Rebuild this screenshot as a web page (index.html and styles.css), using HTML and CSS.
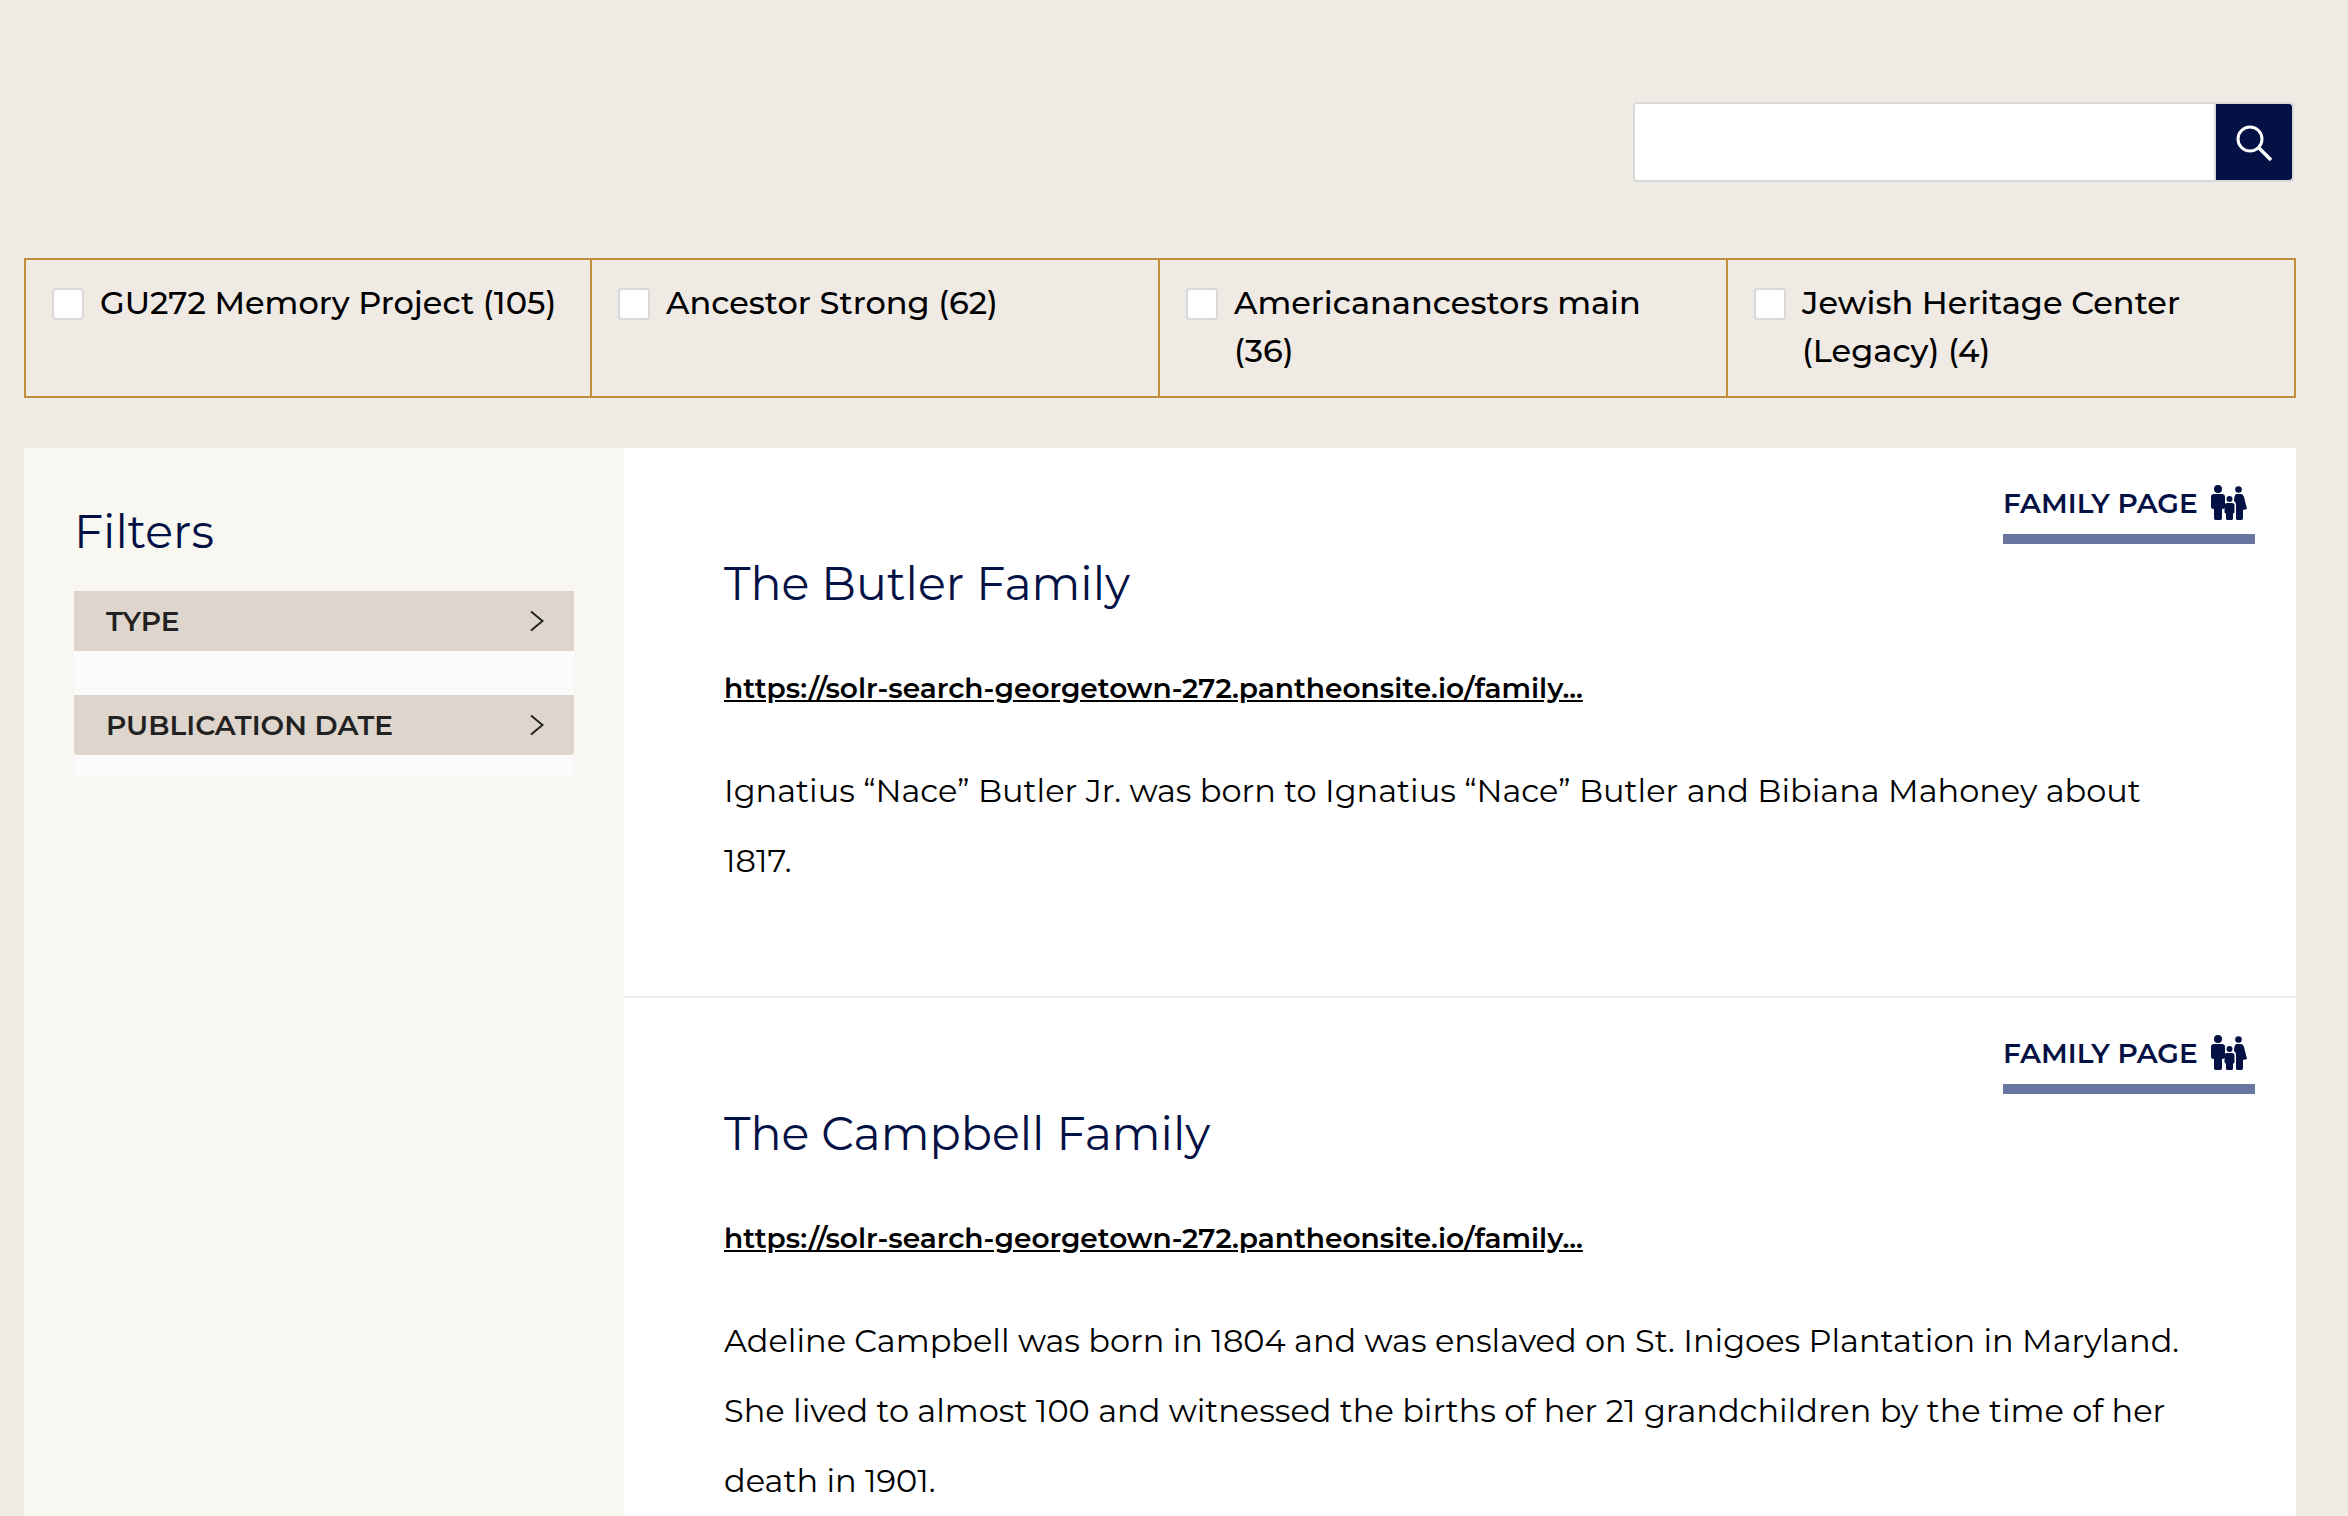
FILE: index.html
```html
<!DOCTYPE html>
<html lang="en">
<head>
<meta charset="utf-8">
<meta name="viewport" content="width=device-width, initial-scale=1">
<title>Search results</title>
<link rel="stylesheet" href="styles.css">
</head>
<body>
<svg class="sprite" aria-hidden="true">
  <symbol id="family" viewBox="0 0 36 36">
    <circle cx="7" cy="4" r="4"/>
    <path d="M3 9h8q3 0 3 3v10q0 2-2.500 2H11v9q0 2-1.500 2h-5Q3 35 3 33v-9H2.500Q0 24 0 22V12q0-3 3-3z"/>
    <circle cx="18.500" cy="14" r="3"/>
    <path d="M16 18h5q2.500 0 2.500 2.500v6.500q0 1.500-1.500 1.500v5q0 1.500-1.500 1.500h-4q-1.500 0-1.500-1.500v-5q-1.500 0-1.500-1.500v-6.500q0-2.500 2.500-2.500z"/>
    <circle cx="27.500" cy="4.500" r="3.300"/>
    <path d="M25 9h5q2 0 3 3l3 12-4 1v8q0 2-1.500 2h-4.500Q25 35 25 33v-6V20q0-3-2-4 0-5 2-7z"/>
  </symbol>
</svg>
<header class="top">
  <form class="search" role="search">
    <input class="search-field" type="search" aria-label="Search">
    <button class="search-button" type="button" aria-label="Submit search">
      <svg width="38" height="38" viewBox="0 0 38 38" fill="none" stroke="#fff" stroke-width="3"><circle cx="15" cy="16" r="12"/><path d="M23.500 24.500 36 37" stroke-width="3.500"/></svg>
    </button>
  </form>
</header>
<main class="page">
  <fieldset class="sites" aria-label="Sites">
    <label class="site"><input type="checkbox"><span>GU272 Memory Project (105)</span></label>
    <label class="site"><input type="checkbox"><span>Ancestor Strong (62)</span></label>
    <label class="site"><input type="checkbox"><span>Americanancestors main (36)</span></label>
    <label class="site"><input type="checkbox"><span>Jewish Heritage Center (Legacy) (4)</span></label>
  </fieldset>
  <div class="columns">
    <aside class="filters">
      <h2 class="heading">Filters</h2>
      <div class="accordion">
        <button class="toggle" type="button">TYPE
          <svg width="14" height="22" viewBox="0 0 14 22" fill="none" stroke="#222" stroke-width="2"><path d="M1 1.500 12.500 11 1 20.500"/></svg>
        </button>
        <button class="toggle" type="button">PUBLICATION DATE
          <svg width="14" height="22" viewBox="0 0 14 22" fill="none" stroke="#222" stroke-width="2"><path d="M1 1.500 12.500 11 1 20.500"/></svg>
        </button>
      </div>
    </aside>
    <section class="results">
      <article class="result">
        <div class="badge">FAMILY PAGE <svg width="36" height="36"><use href="#family"/></svg></div>
        <h2 class="heading">The Butler Family</h2>
        <a class="url" href="#butler">https://solr-search-georgetown-272.pantheonsite.io/family...</a>
        <p class="summary">Ignatius “Nace” Butler Jr. was born to Ignatius “Nace” Butler and Bibiana Mahoney about 1817.</p>
      </article>
      <article class="result">
        <div class="badge">FAMILY PAGE <svg width="36" height="36"><use href="#family"/></svg></div>
        <h2 class="heading">The Campbell Family</h2>
        <a class="url" href="#campbell">https://solr-search-georgetown-272.pantheonsite.io/family...</a>
        <p class="summary">Adeline Campbell was born in 1804 and was enslaved on St. Inigoes Plantation in Maryland. She lived to almost 100 and witnessed the births of her 21 grandchildren by the time of her death in 1901.</p>
      </article>
    </section>
  </div>
</main>
</body>
</html>
```

FILE: styles.css
```css
* {
  box-sizing: border-box;
}

body {
  margin: 0;
  background: #efeae3;
  color: #000;
  font-family: "Montserrat", "Inter", sans-serif;
  font-size: 32px;
}

.sprite {
  display: none;
}

.top {
  display: flex;
  justify-content: flex-end;
  padding: 102px 54px 76px 24px;
}

.search {
  display: flex;
  width: 661px;
  height: 80px;
  border: 2px solid #d9d9d9;
  border-radius: 4px;
  background: #fff;
}

.search-field {
  flex: 1;
  min-width: 0;
  border: 0;
  padding: 0 20px;
  background: transparent;
  font: inherit;
}

.search-button {
  display: flex;
  align-items: center;
  justify-content: center;
  width: 78px;
  padding: 0;
  border: 0;
  border-left: 2px solid #d9d9d9;
  border-radius: 0 3px 3px 0;
  background: #041144;
}

.page {
  margin: 0 52px 0 24px;
}

.sites {
  display: grid;
  grid-template-columns: repeat(4, 1fr);
  min-height: 140px;
  margin: 0 0 50px;
  padding: 0;
  border: solid #be9139;
  border-width: 2px 0;
}

.site {
  display: flex;
  gap: 16px;
  padding: 19px 26px 21px;
  border-right: 2px solid #be9139;
  font-weight: 500;
  line-height: 48px;
}

.site:first-child {
  border-left: 2px solid #be9139;
}

.site input {
  appearance: none;
  flex: none;
  width: 32px;
  height: 32px;
  margin: 9px 0 0;
  border: 2px solid #d9d9d9;
  border-radius: 4px;
  background: #fff;
}

.columns {
  display: grid;
  grid-template-columns: 600px 1fr;
}

.filters {
  padding: 54px 50px;
  background: #f8f7f2;
}

.heading {
  margin: 0;
  color: #041144;
  font-size: 46px;
  font-weight: 400;
  line-height: 60px;
}

.accordion {
  display: flex;
  flex-direction: column;
  gap: 44px;
  margin-top: 29px;
  padding-bottom: 22px;
  background: #fafafa;
}

.toggle {
  display: flex;
  align-items: center;
  justify-content: space-between;
  height: 60px;
  padding: 0 30px 0 32px;
  border: 0;
  background: #ded6cc;
  color: #222;
  font: 600 28px "Montserrat", "Inter", sans-serif;
}

.toggle:last-child {
  border-radius: 0 0 4px 4px;
}

.results {
  background: #fff;
}

.result {
  display: flex;
  flex-direction: column;
  align-items: flex-start;
  min-height: 550px;
  padding: 34px 100px 72px;
  border-bottom: 2px solid #eee;
}

.badge {
  display: flex;
  align-items: center;
  align-self: flex-end;
  justify-content: space-between;
  width: 252px;
  height: 62px;
  margin-right: -59px;
  padding: 0 8px 10px 0;
  border-bottom: 10px solid #69769f;
  color: #041144;
  font-size: 28px;
  font-weight: 600;
}

.badge svg {
  fill: #041144;
}

.result .heading {
  margin-top: 10px;
}

.url {
  margin-top: 52px;
  color: #000;
  font-size: 28px;
  font-weight: 600;
  line-height: 44px;
}

.summary {
  margin: 46px 0 0;
  line-height: 70px;
}
```
